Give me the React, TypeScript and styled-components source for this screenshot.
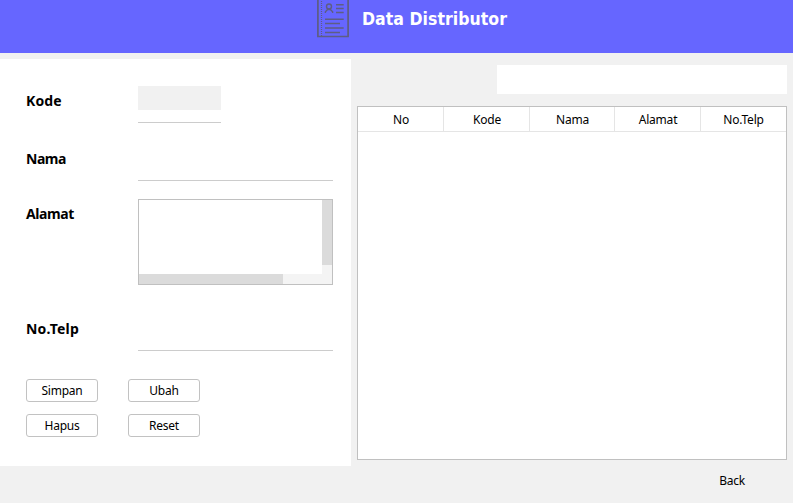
import React from 'react';
import styled, { createGlobalStyle } from 'styled-components';

const GlobalStyle = createGlobalStyle`
  * { box-sizing: border-box; }
  body { margin: 0; background: #f1f1f1; overflow: hidden; }
`;

const Window = styled.div`
  width: 793px;
  height: 503px;
  display: flex;
  flex-direction: column;
  background: #f1f1f1;
  color: #000;
  font: 12px/16px 'Noto Sans', 'Open Sans', sans-serif;
`;

const Header = styled.header`
  flex: 0 0 53px;
  display: flex;
  align-items: flex-start;
  padding-left: 317px;
  gap: 13px;
  background: #6666ff;
`;

const Title = styled.h1`
  margin: 7px 0 0;
  color: #fff;
  font: bold 17.5px/24px 'DejaVu Sans Condensed', 'DejaVu Sans', sans-serif;
  font-stretch: condensed;
  letter-spacing: 0.03px;
  white-space: nowrap;
`;

const Body = styled.main`
  flex: 1;
  display: flex;
  gap: 6px;
  padding: 6px 6px 0 0;
`;

const FormPanel = styled.form`
  width: 351px;
  height: 407px;
  padding: 27px 18px 0 26px;
  background: #fff;
`;

const Field = styled.div<{ $height: number; $gap?: number }>`
  display: grid;
  grid-template-columns: 112px 195px;
  height: ${(p) => p.$height}px;
  margin-bottom: ${(p) => p.$gap ?? 0}px;
`;

const Label = styled.label<{ $top: number; $spacing?: number }>`
  padding-top: ${(p) => p.$top}px;
  font: bold 14px/18px 'Noto Sans', 'Open Sans', sans-serif;
  letter-spacing: ${(p) => p.$spacing ?? -0.5}px;
`;

const Line = styled.input`
  width: 195px;
  height: 100%;
  padding: 0;
  border: 0;
  border-bottom: 1px solid #cccccc;
  border-radius: 0;
  background: #fff;
  outline: none;
`;

const CodeField = styled.div`
  width: 83px;
  height: 37px;
  border-bottom: 1px solid #cccccc;
`;

const CodeValue = styled.div`
  height: 24px;
  background: #f1f1f1;
`;

const ScrollArea = styled.div`
  display: grid;
  grid-template-columns: 1fr 10px;
  grid-template-rows: 1fr 10px;
  height: 86px;
  border: 1px solid #c0c0c0;
  background: #fff;
`;

const VerticalTrack = styled.div`
  grid-area: 1 / 2 / 3 / 3;
  background: #f4f4f4;
`;

const HorizontalTrack = styled.div`
  grid-area: 2 / 1;
  background: #f4f4f4;
`;

const Thumb = styled.div<{ $w: number; $h: number }>`
  width: ${(p) => p.$w}px;
  height: ${(p) => p.$h}px;
  background: #dbdbdb;
`;

const Actions = styled.div`
  display: grid;
  grid-template-columns: 72px 72px;
  grid-auto-rows: 23px;
  gap: 12px 30px;
`;

const Button = styled.button`
  padding: 0;
  border: 1px solid #c2c2c2;
  border-radius: 3px;
  background: #fff;
  color: #000;
  font: inherit;
  line-height: 21px;
  letter-spacing: -0.25px;
`;

const DataPanel = styled.section`
  flex: 1;
  display: flex;
  flex-direction: column;
`;

const Search = styled.input`
  align-self: flex-end;
  width: 290px;
  height: 29px;
  margin: 6px 0 12px;
  border: 0;
  background: #fff;
  outline: none;
`;

const Table = styled.div`
  height: 354px;
  border: 1px solid #c0c0c0;
  background: #fff;
`;

const HeadRow = styled.div`
  display: grid;
  grid-template-columns: 86px 86px 85px 86px 85px;
  height: 25px;
  border-bottom: 1px solid #e5e5e5;
`;

const HeadCell = styled.div`
  border-right: 1px solid #e5e5e5;
  padding-left: 1px;
  text-align: center;
  line-height: 25px;
  letter-spacing: -0.2px;
  &:last-child { border-right: 0; padding-left: 0; }
`;

const Back = styled.button`
  align-self: flex-end;
  width: 72px;
  height: 23px;
  margin: 9px 19px 0 0;
  padding: 0;
  border: 0;
  background: transparent;
  color: #000;
  font: inherit;
  letter-spacing: -0.3px;
`;

const ProfileIcon = () => (
  <svg width="32" height="38" viewBox="0 0 32 38" fill="none" stroke="#5e5e83">
    <path d="M.9 0V36.5H31.1V0" strokeWidth="1.7" />
    <path d="M4.5 1V36" strokeWidth="1.2" strokeDasharray="1 1" />
    <circle cx="12" cy="6.5" r="2.5" strokeWidth="1.4" />
    <path d="M8.4 13v-1.2L10.6 9.5h2.8l2.2 2.3V13" strokeWidth="1.4" />
    <path d="M19 4.8h7.7M19 8.5h7.7M19 12.4h7.7M8 19.3h18.7M8 23.5h15M8 28h18.7M8 32.4h15" strokeWidth="1.5" />
  </svg>
);

const columns = ['No', 'Kode', 'Nama', 'Alamat', 'No.Telp'];
const actions = ['Simpan', 'Ubah', 'Hapus', 'Reset'];

export default function App() {
  return (
    <Window>
      <GlobalStyle />
      <Header>
        <ProfileIcon />
        <Title>Data Distributor</Title>
      </Header>
      <Body>
        <FormPanel onSubmit={(e) => e.preventDefault()}>
          <Field $height={37}>
            <Label $top={6} $spacing={0.1}>Kode</Label>
            <CodeField><CodeValue /></CodeField>
          </Field>
          <Field $height={58} $gap={18}>
            <Label $top={27} htmlFor="nama">Nama</Label>
            <Line id="nama" />
          </Field>
          <Field $height={86}>
            <Label $top={6} $spacing={-0.4}>Alamat</Label>
            <ScrollArea>
              <VerticalTrack><Thumb $w={10} $h={65} /></VerticalTrack>
              <HorizontalTrack><Thumb $w={144} $h={10} /></HorizontalTrack>
            </ScrollArea>
          </Field>
          <Field $height={66} $gap={28}>
            <Label $top={35} $spacing={0.2} htmlFor="telp">No.Telp</Label>
            <Line id="telp" />
          </Field>
          <Actions>
            {actions.map((name) => <Button key={name} type="button">{name}</Button>)}
          </Actions>
        </FormPanel>
        <DataPanel>
          <Search aria-label="Search" />
          <Table>
            <HeadRow>
              {columns.map((name) => <HeadCell key={name}>{name}</HeadCell>)}
            </HeadRow>
          </Table>
          <Back type="button">Back</Back>
        </DataPanel>
      </Body>
    </Window>
  );
}
